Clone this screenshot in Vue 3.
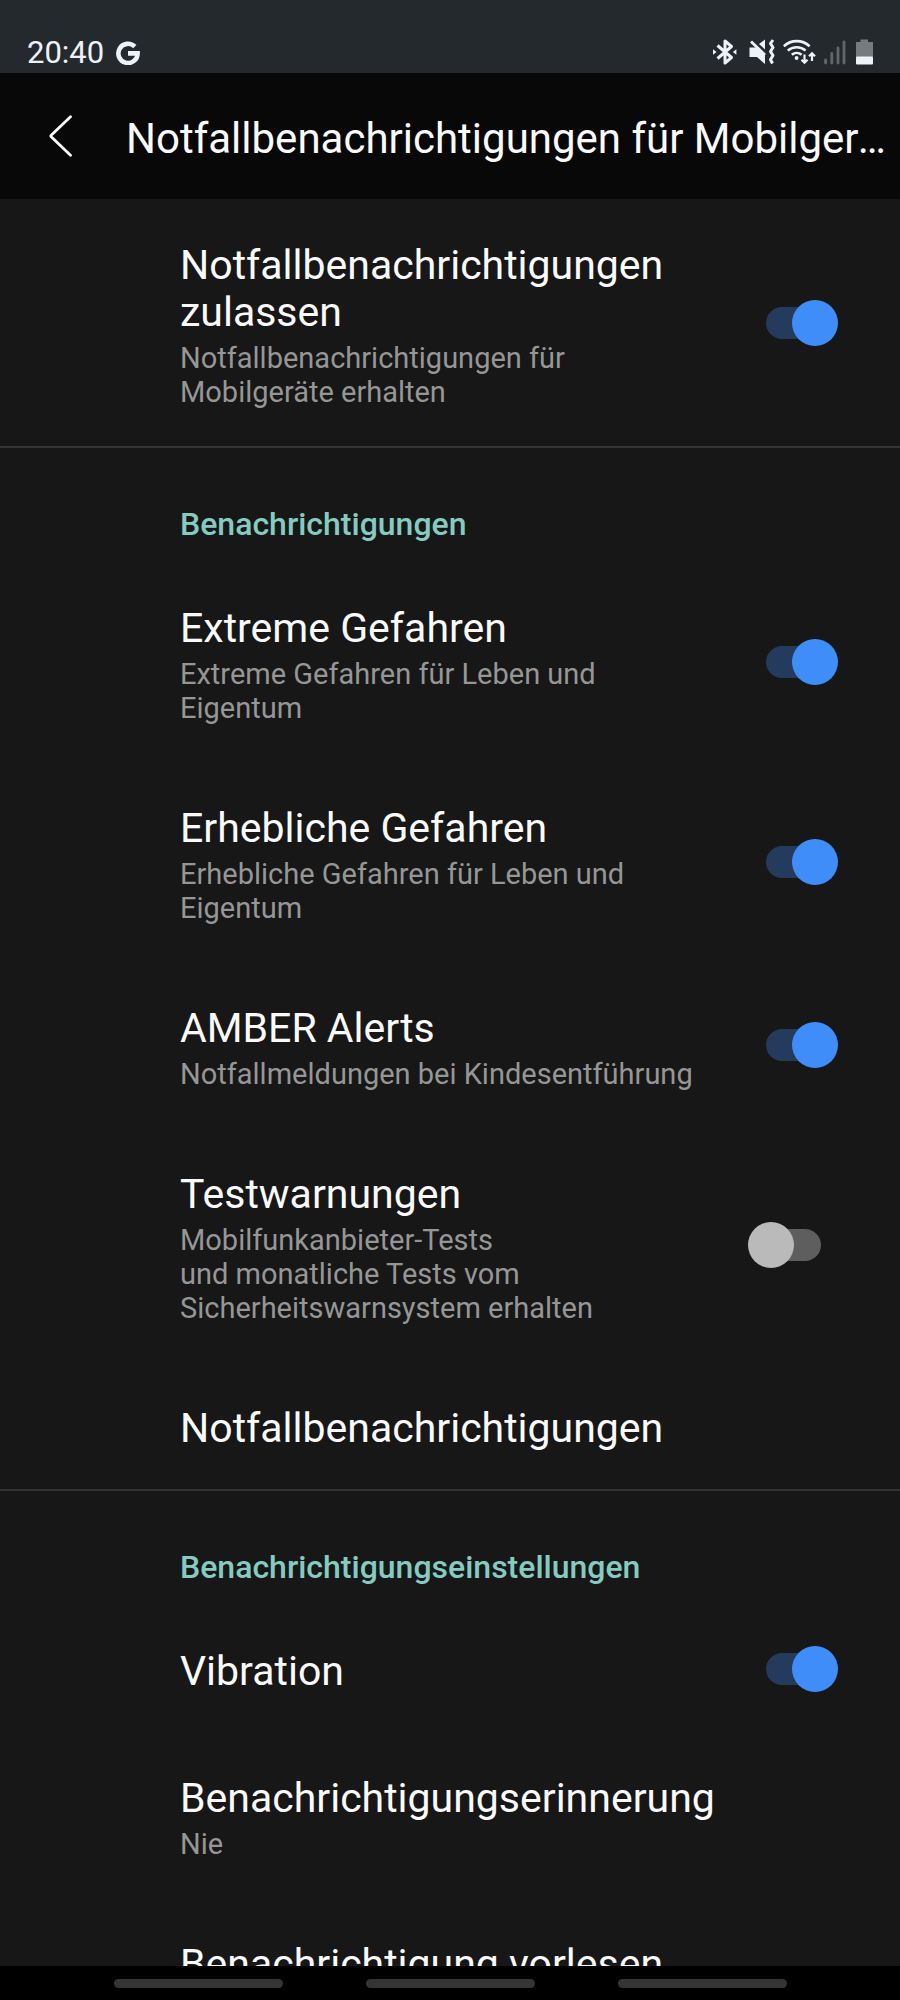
<script setup>
import { ref } from "vue";

const allowAlerts = ref([
  {
    id: "allow",
    title: "Notfallbenachrichtigungen zulassen",
    summary: "Notfallbenachrichtigungen für Mobilgeräte erhalten",
    checked: true,
  },
]);

const alerts = ref([
  {
    id: "extreme",
    title: "Extreme Gefahren",
    summary: "Extreme Gefahren für Leben und Eigentum",
    checked: true,
  },
  {
    id: "severe",
    title: "Erhebliche Gefahren",
    summary: "Erhebliche Gefahren für Leben und Eigentum",
    checked: true,
  },
  {
    id: "amber",
    title: "AMBER Alerts",
    summary: "Notfallmeldungen bei Kindesentführung",
    checked: true,
  },
  {
    id: "test",
    title: "Testwarnungen",
    summary: "Mobilfunkanbieter-Tests\nund monatliche Tests vom Sicherheitswarnsystem erhalten",
    checked: false,
  },
  { id: "history", title: "Notfallbenachrichtigungen" },
]);

const preferences = ref([
  { id: "vibration", title: "Vibration", checked: true },
  { id: "reminder", title: "Benachrichtigungserinnerung", summary: "Nie" },
  { id: "speak", title: "Benachrichtigung vorlesen" },
]);

const sections = [
  { id: "main", heading: "", items: allowAlerts },
  { id: "alerts", heading: "Benachrichtigungen", items: alerts },
  { id: "preferences", heading: "Benachrichtigungseinstellungen", items: preferences },
];

const navButtons = ["recents", "home", "back"];

function isSwitch(item) {
  return item.checked !== undefined;
}
</script>

<template>
  <div class="screen">
    <div class="status-bar">
      <div class="status-left">
        <span class="clock">20:40</span>
        <svg width="24" height="24" viewBox="0 0 24 24" aria-hidden="true">
          <path
            d="M18.8 5.6A9.6 9.6 0 1 0 21.6 12.4H12"
            fill="none"
            stroke="currentColor"
            stroke-width="4.6"
          />
        </svg>
      </div>
      <div class="status-right" aria-hidden="true">
        <!-- bluetooth, connected -->
        <svg width="28" height="28" viewBox="0 0 28 28">
          <path
            d="M4.5 6.5L18.5 18.5L12 24V2L18.5 7.5L4.5 19.5"
            fill="none"
            stroke="currentColor"
            stroke-width="3"
            stroke-linejoin="round"
          />
          <path d="M0 10.2L3.6 13L0 15.8zM23.4 10.2L19.8 13L23.4 15.8z" fill="currentColor" />
        </svg>
        <!-- muted, vibrate -->
        <svg width="26" height="28" viewBox="0 0 26 28">
          <path d="M0.5 8.5H7L16 16.5V25L8 18H0.5z" fill="currentColor" />
          <path d="M10 5L16 0.5V10.5z" fill="currentColor" />
          <path d="M2 2.5L16 16" fill="none" stroke="currentColor" stroke-width="2.8" />
          <path
            d="M24 1L21.5 4.5L24 8.5L21.5 12.5L24 16.5L21.5 20.5L23.5 24.5"
            fill="none"
            stroke="currentColor"
            stroke-width="3"
            stroke-linejoin="round"
          />
        </svg>
        <!-- wifi with traffic arrows -->
        <svg width="33" height="28" viewBox="0 0 33 28">
          <g fill="none" stroke="currentColor" stroke-width="2.6">
            <path d="M0.8 7.2A19 19 0 0 1 26.6 7.2" />
            <path d="M4.8 11.6A13.4 13.4 0 0 1 22.6 11.6" />
            <path d="M8.8 15.8A7.6 7.6 0 0 1 18.6 15.8" />
            <path d="M21.5 15.5V24M18.5 20.8L21.5 23.8L24.5 20.8" stroke-width="2.2" />
            <path d="M29 22V14M26 17.2L29 14.2L32 17.2" stroke-width="2.2" />
          </g>
          <circle cx="13.6" cy="19" r="1.9" fill="currentColor" />
        </svg>
        <!-- mobile signal -->
        <svg class="dim" width="24" height="28" viewBox="0 0 24 28">
          <path
            d="M1.6 21V24M7.8 14.5V24M14 9V24M20 3V24"
            stroke="currentColor"
            stroke-width="2.8"
            stroke-linecap="round"
          />
        </svg>
        <!-- battery -->
        <svg width="17" height="28" viewBox="0 0 17 28">
          <path d="M4.5 0.5H12V3H17V18H0V3H4.5z" fill="#777b7e" />
          <rect y="17.5" width="17" height="8" rx="1" fill="currentColor" />
        </svg>
      </div>
    </div>

    <header class="app-bar">
      <button type="button" class="back-btn" aria-label="Zurück">
        <svg width="24" height="42" viewBox="0 0 24 42" aria-hidden="true">
          <path
            d="M21.5 1.8L2.2 20.2Q1.4 21 2.2 21.8L21.5 40.2"
            fill="none"
            stroke="currentColor"
            stroke-width="2.8"
            stroke-linecap="round"
          />
        </svg>
      </button>
      <h1>Notfallbenachrichtigungen für Mobilgeräte</h1>
    </header>

    <main class="settings">
      <section v-for="section in sections" :key="section.id" class="section">
        <h2 v-if="section.heading">{{ section.heading }}</h2>
        <template v-for="item in section.items.value" :key="item.id">
          <label v-if="isSwitch(item)" class="row">
            <span class="row-text">
              <span class="title">{{ item.title }}</span>
              <span v-if="item.summary" class="summary">{{ item.summary }}</span>
            </span>
            <input v-model="item.checked" type="checkbox" role="switch" class="switch" />
          </label>
          <button v-else type="button" class="row">
            <span class="row-text">
              <span class="title">{{ item.title }}</span>
              <span v-if="item.summary" class="summary">{{ item.summary }}</span>
            </span>
          </button>
        </template>
      </section>
    </main>

    <nav class="nav-bar">
      <button
        v-for="name in navButtons"
        :key="name"
        type="button"
        class="nav-pill"
        :aria-label="name"
      ></button>
    </nav>
  </div>
</template>

<style>
body {
  margin: 0;
  background: #171717;
}
</style>

<style scoped>
.screen {
  height: 100vh;
  display: flex;
  flex-direction: column;
  overflow: hidden;
  background: #171717;
  color: #fafafa;
  font-family: Roboto, "Noto Sans", sans-serif;
}

.status-bar {
  flex: none;
  display: flex;
  align-items: center;
  justify-content: space-between;
  padding: 32px 27px 0 27px;
  background: #24292d;
  color: #eef2f8;
}

.status-left {
  display: flex;
  align-items: center;
  gap: 12px;
}

.clock {
  font-size: 31px;
  line-height: 41px;
}

.status-right {
  display: flex;
  align-items: center;
  gap: 8px;
}

.dim {
  color: #63676b;
}

.app-bar {
  flex: none;
  display: flex;
  align-items: center;
  height: 126px;
  padding: 0 8px 0 36px;
  background: #080808;
}

.back-btn {
  flex: none;
  display: flex;
  width: 90px;
  padding: 0 13px;
  border: 0;
  background: none;
  color: inherit;
  cursor: pointer;
}

.app-bar h1 {
  flex: 1;
  min-width: 0;
  margin: 0;
  padding-top: 6px;
  font-size: 42px;
  font-weight: 400;
  line-height: 50px;
  white-space: nowrap;
  overflow: hidden;
  text-overflow: ellipsis;
}

.settings {
  flex: 1;
  min-height: 0;
  overflow: hidden;
}

.section + .section {
  border-top: 2px solid #343434;
}

.section h2 {
  margin: 0;
  padding: 58px 62px 20px 180px;
  color: #85cbc1;
  font-size: 32px;
  font-weight: 500;
  line-height: 36px;
}

.row {
  display: flex;
  align-items: center;
  gap: 28px;
  box-sizing: border-box;
  width: 100%;
  padding: 0 62px 0 180px;
  border: 0;
  background: none;
  color: inherit;
  font: inherit;
  text-align: left;
  cursor: pointer;
}

.row-text {
  flex: 1;
  min-width: 0;
  display: flex;
  flex-direction: column;
  gap: 5px;
  padding: 43px 0 37px;
}

.title {
  font-size: 41px;
  line-height: 47px;
}

.summary {
  color: #969696;
  font-size: 29px;
  line-height: 34px;
  white-space: pre-line;
}

.switch {
  flex: none;
  appearance: none;
  position: relative;
  width: 90px;
  height: 46px;
  margin: 0;
  cursor: pointer;
}

.switch::before {
  content: "";
  position: absolute;
  top: 7px;
  left: 18px;
  width: 55px;
  height: 32px;
  border-radius: 16px;
  background: #5e5e5e;
}

.switch::after {
  content: "";
  position: absolute;
  top: 0;
  left: 0;
  width: 46px;
  height: 46px;
  border-radius: 50%;
  background: #bababa;
}

.switch:checked::before {
  background: #243b5d;
}

.switch:checked::after {
  left: 44px;
  background: #3f8df9;
}

.nav-bar {
  flex: none;
  display: flex;
  align-items: center;
  justify-content: center;
  gap: 83px;
  height: 34px;
  background: #000000;
}

.nav-pill {
  width: 169px;
  height: 9px;
  padding: 0;
  border: 0;
  border-radius: 5px;
  background: #343434;
  cursor: pointer;
}
</style>
